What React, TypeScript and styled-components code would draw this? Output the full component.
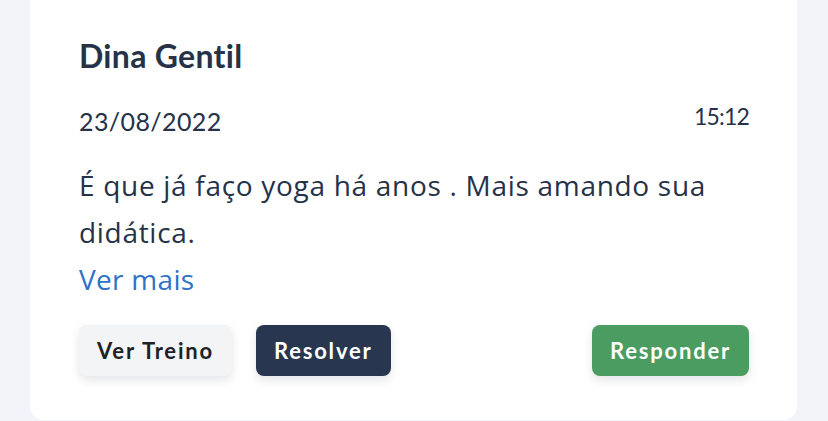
import React from "react";
import styled, { createGlobalStyle } from "styled-components";

const Global = createGlobalStyle`
  html, body { margin: 0; padding: 0; background: #f3f4f9; }
  body { font-family: Lato, "Noto Sans", sans-serif; }
`;

const Page = styled.div`
  width: 828px;
  height: 421px;
  box-sizing: border-box;
  padding: 0 31px 0 30px;
  overflow: hidden;
`;

const Card = styled.div`
  background: #ffffff;
  border-radius: 0 0 14px 14px;
  height: 420px;
  box-sizing: border-box;
  padding: 36px 48px 0 49px;
  display: flex;
  flex-direction: column;
  color: #253248;
`;

const Name = styled.div`
  font-size: 32px;
  font-weight: 700;
  line-height: 40px;
  letter-spacing: 0.3px;
`;

const MetaRow = styled.div`
  display: flex;
  justify-content: space-between;
  align-items: flex-start;
  margin-top: 25px;
`;

const DateText = styled.span`
  font-size: 25px;
  line-height: 30px;
  letter-spacing: 0.4px;
  margin-top: 5px;
`;

const TimeText = styled.span`
  font-size: 23px;
  line-height: 30px;
  letter-spacing: -0.8px;
`;

const Body = styled.div`
  margin-top: 26px;
  font-family: "Open Sans", Lato, sans-serif;
  font-size: 28px;
  line-height: 47px;
  letter-spacing: 0.7px;
`;

const Message = styled.p`
  margin: 0;
`;

const More = styled.a`
  color: #2f72c6;
  text-decoration: none;
  letter-spacing: 0.3px;
`;

const Actions = styled.div`
  display: flex;
  align-items: center;
  gap: 24px;
  margin-top: 22px;
`;

const Spacer = styled.div`
  flex: 1;
`;

const Button = styled.button<{ $variant: "light" | "dark" | "green" }>`
  height: 51px;
  padding: 0 18px;
  border: none;
  border-radius: 8px;
  font-family: Lato, "Noto Sans", sans-serif;
  font-size: 22px;
  font-weight: 700;
  letter-spacing: 1.8px;
  box-shadow: 0 4px 10px rgba(30, 40, 60, 0.12);
  background: ${(p) =>
    p.$variant === "light" ? "#f3f4f6" : p.$variant === "dark" ? "#28364f" : "#4a9c60"};
  color: ${(p) => (p.$variant === "light" ? "#1f2125" : "#ffffff")};
`;

export default function App() {
  return (
    <>
      <Global />
      <Page>
        <Card>
          <Name>Dina Gentil</Name>
          <MetaRow>
            <DateText>23/08/2022</DateText>
            <TimeText>15:12</TimeText>
          </MetaRow>
          <Body>
            <Message>É que já faço yoga há anos . Mais amando sua didática.</Message>
            <More href="#">Ver mais</More>
          </Body>
          <Actions>
            <Button $variant="light">Ver Treino</Button>
            <Button $variant="dark">Resolver</Button>
            <Spacer />
            <Button $variant="green">Responder</Button>
          </Actions>
        </Card>
      </Page>
    </>
  );
}
